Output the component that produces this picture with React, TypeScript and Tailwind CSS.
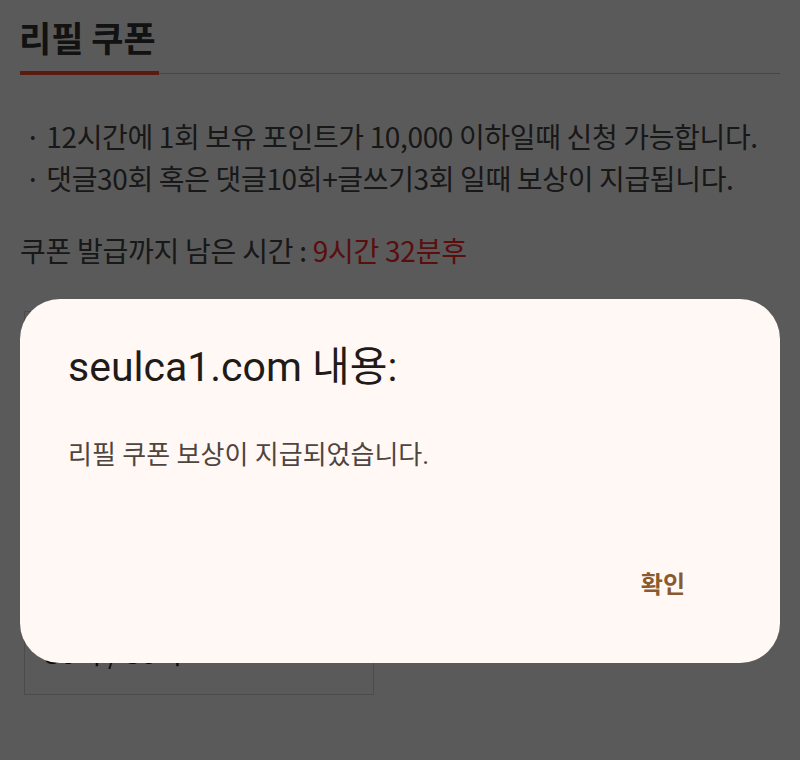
const sans = "font-['Roboto','Noto_Sans_CJK_KR',sans-serif]"
const kr = "font-['Noto_Sans_CJK_KR',sans-serif]"

function CouponPage() {
  return (
    <div className={`px-5 pt-[12px] text-[#444] ${kr}`}>
      {/* heading */}
      <div className="relative">
        <h1 className="text-[35px] leading-[50px] font-bold text-[#333] -ml-[1px]">리필 쿠폰</h1>
        <div className="mt-[9px] relative h-[4px]">
          <div className="absolute left-0 right-0 top-[2px] h-px bg-[#c8c8c8]" />
          <div className="absolute left-0 top-0 w-[139px] h-[4px] bg-[#ff4a2c]" />
        </div>
      </div>

      <ul className="mt-[40px] text-[28px] leading-[42px] tracking-[-0.35px] pl-[5px]">
        <li>· 12시간에 1회 보유 포인트가 10,000 이하일때 신청 가능합니다.</li>
        <li>· 댓글30회 혹은 댓글10회+글쓰기3회 일때 보상이 지급됩니다.</li>
      </ul>

      <p className="mt-[30px] text-[28px] leading-[42px] tracking-[-0.25px]">
        쿠폰 발급까지 남은 시간 : <span className="text-[#ff2a2a]">9시간 32분후</span>
      </p>

      <div className="mt-[40px] ml-[4px] w-[350px] h-[384px] border border-[#d4d4d4] flex flex-col justify-end px-5 pb-[22px]">
        <p className="text-[28px] leading-[40px] text-[#222]">30회 / 30회</p>
      </div>
    </div>
  )
}

export default function App() {
  return (
    <div className={`relative w-[800px] h-[760px] overflow-hidden bg-white ${sans}`}>
      <CouponPage />

      {/* alert overlay */}
      <div className="absolute inset-0 bg-[rgba(0,0,0,0.647)]">
        <div className="mt-[299px] mx-5 h-[364px] rounded-[40px] bg-[#fff8f5] pl-[48px] pr-[95px] pt-[43px] flex flex-col">
          <h2 className="text-[41px] leading-[50px] text-[#1f1b19]">seulca1.com 내용:</h2>
          <p className="mt-[47px] text-[26px] leading-[32px] text-[#4f4540]">리필 쿠폰 보상이 지급되었습니다.</p>
          <div className="mt-[96px] flex justify-end">
            <button className="text-[24px] leading-[36px] font-bold text-[#8a5a2e]">확인</button>
          </div>
        </div>
      </div>
    </div>
  )
}
